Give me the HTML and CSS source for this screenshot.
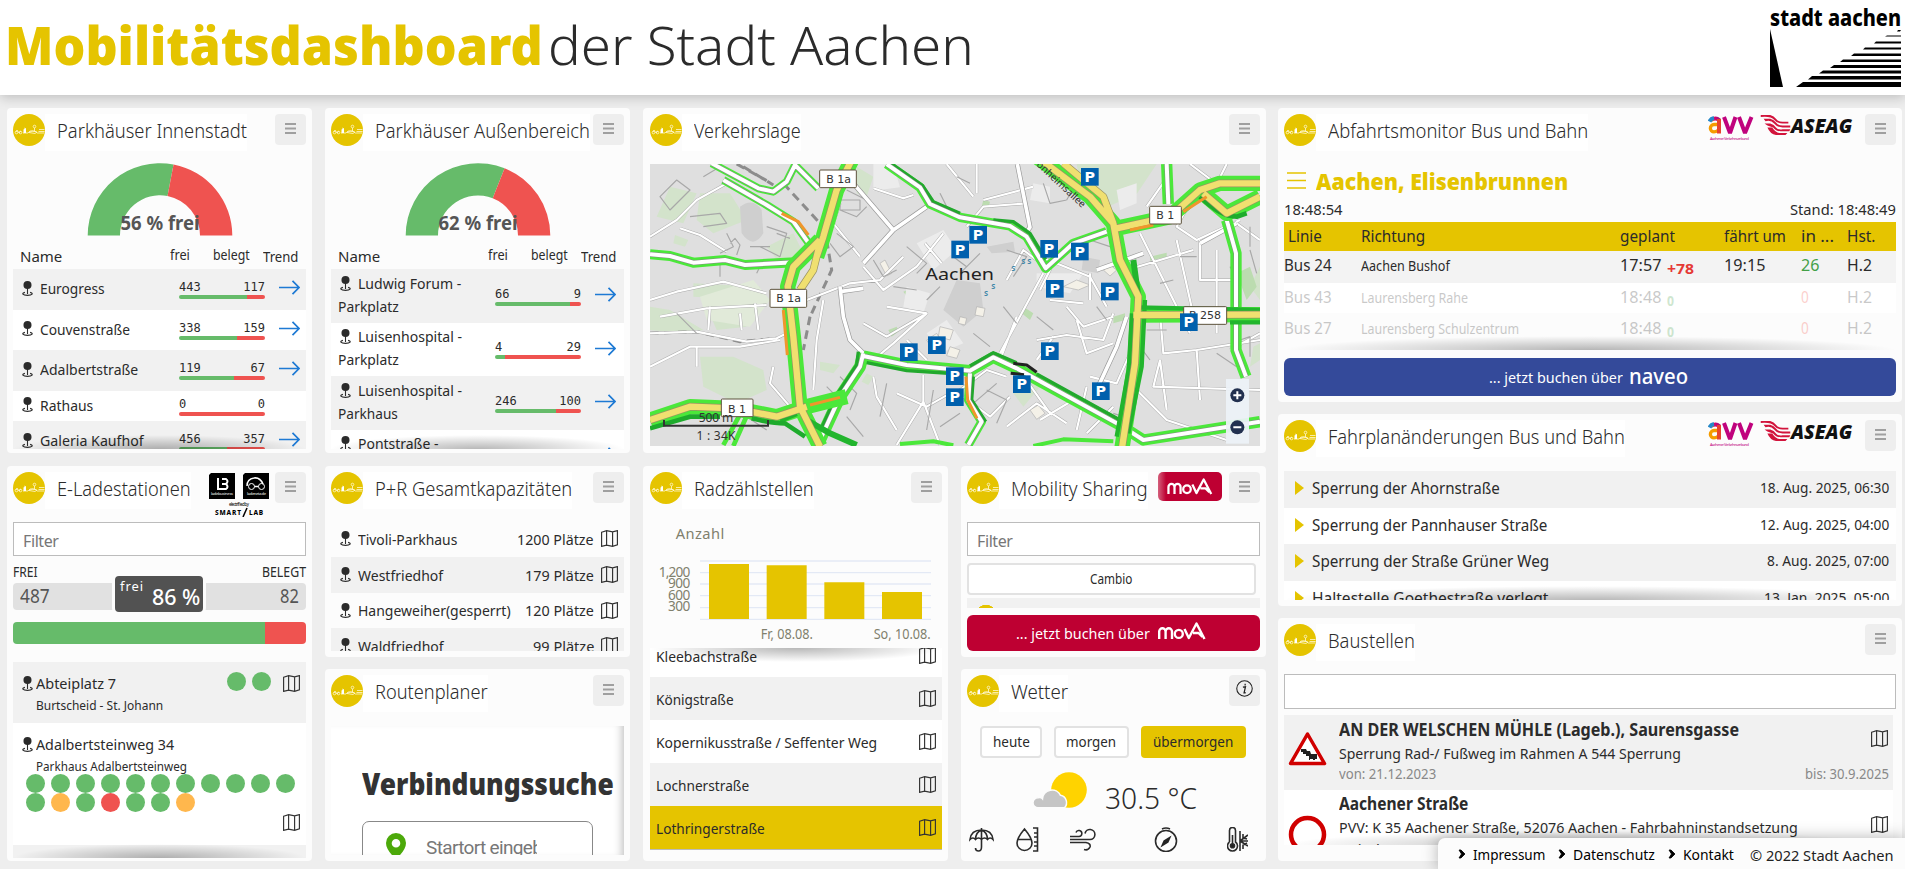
FILE: index.html
```html
<!DOCTYPE html>
<html lang="de">
<head>
<meta charset="utf-8">
<title>Mobilitätsdashboard der Stadt Aachen</title>
<link rel="stylesheet" href="styles.css">
</head>
<body>
<svg class="defs" width="0" height="0">
  <defs>
    <symbol id="pin" viewBox="0 0 12 17"><circle cx="6" cy="4.6" r="4.4" fill="#2b2b2b"/><path d="M6 8v6.5M3.2 12.7C-.8 13.6.6 16 6 16s6.800-2.400 2.800-3.300" fill="none" stroke="#2b2b2b" stroke-width="1.200"/></symbol>
    <symbol id="map" viewBox="0 0 17 17"><path d="M.6 2.200 5.600.7l6 1.200L16.400.6v14.200l-4.800 1.500-6-1.200-5 1.300zM5.600.7v14.400M11.600 1.900v14.400" fill="none" stroke="#333" stroke-width="1.150"/></symbol>
    <symbol id="arrow" viewBox="0 0 21 15"><path d="M0 7.500h20M13.500.8l6.500 6.700-6.500 6.700" fill="none" stroke="#1e7ad4" stroke-width="1.700"/></symbol>
    <symbol id="burger" viewBox="0 0 11 11"><path d="M0 1h11M0 5.500h11M0 10h11" stroke="#9f9f9f" stroke-width="1.800"/></symbol>
    <symbol id="logo" viewBox="0 0 32 32"><circle cx="16" cy="16" r="16" fill="#e5c400"/><g fill="none" stroke="#fff8d0" stroke-width=".8"><path d="M3 18l1-2 2 3 2-2M10 19h5l2-2h5l2 2h7"/><circle cx="3.500" cy="18.500" r="1.300"/><circle cx="7.500" cy="18.500" r="1.300"/><circle cx="21.500" cy="12.500" r="1.300"/><path d="M21.500 14v3M16 18.500l3-1.500 5 1-2 1.500zM26 15.500h5.500M25.500 17.500h6"/></g><path d="M10.500 19v-3.500l1-.5v-1.500l1.500 1V19z" fill="#fff"/></symbol>
    <symbol id="mova" viewBox="0 0 48 18"><g fill="none" stroke="#fff" stroke-width="2.400" stroke-linejoin="round"><path d="M1.200 17V9.500a3.200 3.200 0 0 1 6.400 0V17M7.600 17V9.500a3.200 3.200 0 0 1 6.400 0V17"/><circle cx="20.800" cy="11.900" r="4"/><path d="M26.500 7l4.300 9L38.500 1.500 46.500 17M35 11h5.500l4 4"/></g></symbol>
    <symbol id="aseag" viewBox="0 0 31 21"><path d="M0 0h10q4 1 6 4t7 3h6v2h-6q-6 0-9-4T0 2zM3 4h7q4 1 6 4t7 3h8v2h-8q-6 0-9-4T5 6.500zM4 9h6q4 1 6 4t7 2h8l-1 2H21q-5 0-8-4l-6-2zM7 13h5q4 6 9 6h7l-2 2H16q-6-1-9-8z" fill="#d2143c"/></symbol>
    <linearGradient id="avvg"><stop offset="0" stop-color="#f9b000"/><stop offset=".28" stop-color="#ee5a24"/><stop offset=".45" stop-color="#d6006e"/><stop offset="1" stop-color="#a5127d"/></linearGradient>
    <symbol id="avv" viewBox="0 0 46 26"><g fill="none" stroke-width="4"><path d="M3 5q5-3 8 0v12" stroke="url(#avvg)"/><path d="M1.500 6.500q1.500-3 4.500-3.500" stroke="#2688c9"/><path d="M11 9.500H6a3.300 3.300 0 0 0 0 7.300q4 0 5-3" stroke="#f59c00" stroke-width="3.300"/><path d="M11 4v14.500" stroke="#e8432e"/><path d="M16 2l6 16 5.500-16M31 2l6 16 6.500-16" stroke="#c0027d" stroke-linejoin="bevel"/></g><text x="2" y="25" font-size="4" textLength="39" fill="#c0027d">Aachener Verkehrsverbund</text></symbol>
  </defs>
</svg>

<header class="top">
  <h1><b data-w="538">Mobilitätsdashboard</b><span data-w="426">der Stadt Aachen</span></h1>
  <svg class="city" width="132" height="80" viewBox="0 0 132 80">
    <text x="0" y="18" font-size="23" font-weight="800" textLength="131" lengthAdjust="spacingAndGlyphs">stadt aachen</text>
    <path d="M0 21v58h13z"/>
    <path d="M128 22h3l-1 1.500h-3zM117 27.500h14v1H115zM106 33.500h25v2h-27zM95 39.500h36v2H93zM84 45.500h47v2.500H81zM73 51.500h58V54H70zM64 57h67v3H60zM53 62.500h78v3H49zM42 68h89v3.500H38zM33 74h98v5H26z"/>
  </svg>
</header>

<main class="board">
  <div class="left">
    <section class="card">
      <div class="head"><svg class="ico"><use href="#logo"/></svg><h2><span data-w="190">Parkhäuser Innenstadt</span></h2><button class="menu"><svg><use href="#burger"/></svg></button></div>
      <div class="gauge"><svg width="146" height="74" viewBox="0 0 146 74"><path d="M.7 72.500a72.300 72.300 0 0 1 85.850-71l-6.050 31.500A40 40 0 0 0 33 72.500z" fill="#66bb6a"/><path d="M86.550 1.500A72.300 72.300 0 0 1 145.300 72.500H113a40 40 0 0 0-32.500-39.500z" fill="#ef5350"/><text x="73" y="66.500" text-anchor="middle" textLength="79" lengthAdjust="spacingAndGlyphs">56 % frei</text></svg></div>
      <div class="park p1">
        <div class="cols"><span class="cn">Name</span><span class="cf" data-w="20">frei</span><span class="cb" data-w="37">belegt</span><span class="ct" data-w="35">Trend</span></div>
        <div class="pr h41 odd"><div class="nm"><svg class="pin"><use href="#pin"/></svg><span data-w="65">Eurogress</span></div><div class="bar"><i>443</i><i>117</i><u style="--g:79%"></u></div><svg class="tr"><use href="#arrow"/></svg></div>
        <div class="pr h40"><div class="nm"><svg class="pin"><use href="#pin"/></svg><span data-w="90">Couvenstraße</span></div><div class="bar"><i>338</i><i>159</i><u style="--g:68%"></u></div><svg class="tr"><use href="#arrow"/></svg></div>
        <div class="pr h41 odd"><div class="nm"><svg class="pin"><use href="#pin"/></svg><span data-w="98">Adalbertstraße</span></div><div class="bar"><i>119</i><i>67</i><u style="--g:64%"></u></div><svg class="tr"><use href="#arrow"/></svg></div>
        <div class="pr h30"><div class="nm"><svg class="pin"><use href="#pin"/></svg><span data-w="53">Rathaus</span></div><div class="bar"><i>0</i><i>0</i><u style="--g:0%"></u></div></div>
        <div class="pr h41 odd"><div class="nm"><svg class="pin"><use href="#pin"/></svg><span data-w="104">Galeria Kaufhof</span></div><div class="bar"><i>456</i><i>357</i><u style="--g:56%"></u></div><svg class="tr"><use href="#arrow"/></svg></div>
        <div class="fade"></div>
      </div>
    </section>

    <section class="card">
      <div class="head"><svg class="ico"><use href="#logo"/></svg><h2><span data-w="215">Parkhäuser Außenbereich</span></h2><button class="menu"><svg><use href="#burger"/></svg></button></div>
      <div class="gauge"><svg width="146" height="74" viewBox="0 0 146 74"><path d="M.7 72.500a72.300 72.300 0 0 1 98.900-67.200L87.700 35.300A40 40 0 0 0 33 72.500z" fill="#66bb6a"/><path d="M99.600 5.300A72.300 72.300 0 0 1 145.300 72.500H113a40 40 0 0 0-25.300-37.200z" fill="#ef5350"/><text x="73" y="66.500" text-anchor="middle" textLength="79" lengthAdjust="spacingAndGlyphs">62 % frei</text></svg></div>
      <div class="park p2">
        <div class="cols"><span class="cn">Name</span><span class="cf" data-w="20">frei</span><span class="cb" data-w="37">belegt</span><span class="ct" data-w="35">Trend</span></div>
        <div class="pr h54 odd"><div class="nm two"><svg class="pin"><use href="#pin"/></svg><span data-w="103">Ludwig Forum -</span><br><span data-w="61">Parkplatz</span></div><div class="bar"><i>66</i><i>9</i><u style="--g:87%"></u></div><svg class="tr"><use href="#arrow"/></svg></div>
        <div class="pr h53"><div class="nm two"><svg class="pin"><use href="#pin"/></svg><span data-w="104">Luisenhospital -</span><br><span data-w="61">Parkplatz</span></div><div class="bar"><i>4</i><i>29</i><u style="--g:12%"></u></div><svg class="tr"><use href="#arrow"/></svg></div>
        <div class="pr h54 odd"><div class="nm two"><svg class="pin"><use href="#pin"/></svg><span data-w="104">Luisenhospital -</span><br><span data-w="60">Parkhaus</span></div><div class="bar"><i>246</i><i>100</i><u style="--g:71%"></u></div><svg class="tr"><use href="#arrow"/></svg></div>
        <div class="pr h54 cut"><div class="nm two"><svg class="pin"><use href="#pin"/></svg><span data-w="80">Pontstraße -</span></div><svg class="tr"><use href="#arrow"/></svg></div>
        <div class="fade"></div>
      </div>
    </section>

    <section class="card wide">
      <div class="head"><svg class="ico"><use href="#logo"/></svg><h2><span data-w="107">Verkehrslage</span></h2><button class="menu"><svg><use href="#burger"/></svg></button></div>
      <svg class="citymap" width="610" height="282" viewBox="30 192 1830 846">
        <rect x="30" y="192" width="1830" height="846" fill="#dfdfdf"/>
        <g fill="#d3e3cb">
          <path d="M90 260l80 20-40 90-80-20zM180 280h90l50 80-100 40-50-40zM1310 192h240l-60 90-90 40-80-70zM180 770l100 0 90 40 10 60-90 40-100-50zM30 620l60 10 100 60-60 10-100-10zM200 620l60-10 60 70-90 10zM380 440l80-40 30 60-70 30zM650 200l50 30-20 60-30-10zM1830 560l30-60v100zM1140 820l60 40-50 60-30-40zM1840 740l20-10v50l-30 20zM540 785l60 10-20 25-40-10zM680 820l20 10-15 25-20-10zM105 405l40 15-10 20-35-10zM160 550l200 10v40l-200-10z"/>
          <path d="M180 590l160-50 50 60-60 80-130-20z" fill="#e1ead9"/>
          <path d="M790 575l25-10 15 15-25 15zM745 690l25-10 5 15-20 15zM1530 470l50-12v12l-50 12zM1150 620l30 20-10 20-25-20zM1030 300l20 5-5 20-20-5zM1420 650l35-10v20l-35 10zM1790 520l40-20 20 60-30 40z" fill="#bcdcb0"/>
        </g>
        <g fill="#ececec"><path d="M700 192h60l20 70-80 10zM1430 270l60-20v60l-50 20zM1180 250l50 10v50l-60-10zM830 430l80-40 40 60-70 60zM800 560l70 20-20 60-60-20zM860 700l60-40 50 70-70 30zM1190 520h140l-40 60-100-20z"/></g>
        <g fill="#cfcfcf"><path d="M950 540l70 10 10 80-60 50-60-50zM300 320q40-30 65 10l5 70q-30 50-65 0zM1040 440l80-15 5 30-70 5zM1330 470l50 10-5 40-50-10z"/></g>
        <g fill="#f4f1e8" stroke="#b0b0b0" stroke-width="2"><path d="M860 720l30-20 15 25-30 20zM900 680l40 10-10 30-35-10zM930 740l30 10-10 25-30-8zM1390 510l20-15 20 15-20 18zM1170 930l25-15 20 25-25 18zM720 490l15-10 20 40-15 8zM1010 620l25 5-5 25-25-5zM960 650l20 5-5 20-20-5zM1270 560l40-20 40 15-35 15z"/></g>
        <g fill="none" stroke="#8c8c8c" stroke-width="9" stroke-dasharray="26 16">
          <path d="M290 192l90 50M310 200l90 55M430 250l110 120M560 420l15 90-60 130M510 650l-20 100M30 700l140-5 130 30 110-10"/>
        </g>
        <g id="streets" fill="none" stroke-linejoin="round">
          <g stroke="#a8a8a8" stroke-width="9">
            <path d="M30 410l80-50 60-60 90-50M120 385l60 20 80 50M30 600l80-25 140-30 130 35M60 650l140-25 180-10M30 700l140-5 150 30 90-10 60-30M30 800l120-60h150l120-20M210 620l-5 70M300 640l5 50M345 610l10 80M170 740v60M400 800l-10 50 60 70M550 600l-20 120-10 150M500 600l130-50 90-10 70-70M720 540l60-60M670 500l60 70 100-70 80-100M740 620l120 20-120 70-70-40M700 780l60-50 100-90M700 830l10 60 60 100M770 880l90 40 70-40M850 905l50 130M850 905l-80 130M850 905v-80M800 720l60 60M660 470l-80-100 20-60M700 265l90 30 30-10M855 430l50 60M980 380l50-60 130-10M1000 290l-80-98M1010 280v-88M1030 300l150-40M1100 540l50-90 80 60-30 60M1200 470l150 60 50 90M1350 520v80M1280 620l50 60 90-30M1310 660l30 100 80-30M1230 600l100 10M1080 760l130-240M1130 650l-50 130M1190 720l90-15 110 15 30-80M1190 780l50-70M1350 830l80 20 40-90M1340 860l-30 130M1500 400l60 120 90 180M1460 510l200-60M1610 420l60 270M1660 290l-50 90 60 40 130-60M1680 420v120h110M1730 450v250M1560 640l10 120 100-10 190-30M1560 780l-20 80 320 10M1560 780l20 150M1670 750l10 150M1590 220l-70 100M1790 370l70 50M1650 192l80 60 30-60M1480 860l100 100 180 60M960 870l80-60 60 20M970 890l80 60 60-60M1100 980l90-70 90 60M1340 1000l80-80M1130 800l100 140M1200 960l100-60M1860 700l-90 50"/>
          </g>
          <g stroke="#fff" stroke-width="6.500">
            <path d="M30 410l80-50 60-60 90-50M120 385l60 20 80 50M30 600l80-25 140-30 130 35M60 650l140-25 180-10M30 700l140-5 150 30 90-10 60-30M30 800l120-60h150l120-20M210 620l-5 70M300 640l5 50M345 610l10 80M170 740v60M400 800l-10 50 60 70M550 600l-20 120-10 150M500 600l130-50 90-10 70-70M720 540l60-60M670 500l60 70 100-70 80-100M740 620l120 20-120 70-70-40M700 780l60-50 100-90M700 830l10 60 60 100M770 880l90 40 70-40M850 905l50 130M850 905l-80 130M850 905v-80M800 720l60 60M660 470l-80-100 20-60M700 265l90 30 30-10M855 430l50 60M980 380l50-60 130-10M1000 290l-80-98M1010 280v-88M1030 300l150-40M1100 540l50-90 80 60-30 60M1200 470l150 60 50 90M1350 520v80M1280 620l50 60 90-30M1310 660l30 100 80-30M1230 600l100 10M1080 760l130-240M1130 650l-50 130M1190 720l90-15 110 15 30-80M1190 780l50-70M1350 830l80 20 40-90M1340 860l-30 130M1500 400l60 120 90 180M1460 510l200-60M1610 420l60 270M1660 290l-50 90 60 40 130-60M1680 420v120h110M1730 450v250M1560 640l10 120 100-10 190-30M1560 780l-20 80 320 10M1560 780l20 150M1670 750l10 150M1590 220l-70 100M1790 370l70 50M1650 192l80 60 30-60M1480 860l100 100 180 60M960 870l80-60 60 20M970 890l80 60 60-60M1100 980l90-70 90 60M1340 1000l80-80M1130 800l100 140M1200 960l100-60M1860 700l-90 50"/>
          </g>
          <g stroke="#a8a8a8" stroke-width="3.500">
            <path d="M60 290l50-50 40 30-60 60zM150 350l90-10 20 30-70 10M190 230l50-30M260 400l20 40-40 20M380 380l60 20-20 70-60-30M410 400l40 15M600 330l50 20 30-30M590 400l50 40-40 30-30-40M620 270l60 30M700 480l30 50 40-20M800 440l60 50-30 30M760 560l70 10M110 640l60 60M600 830l50 50-20 50M880 870l-20 120M900 980l60-40M1000 910l70-60M1040 870l60 30-30 70M1420 940l60 20M1190 650l50 40M1280 300l50-90M1350 420l60 20M1100 450l60 20-40 60M1520 690h60M1760 330l60-40M1730 760l60 40M1800 720l30-10v60M1830 450l20 70M1210 250l20 60 50-10M600 300h60v30h-60zM270 430l15-15 15 20-10 30M240 480v50M330 440h60M370 480l-20 40M320 950l60 40M560 860l30 30M620 950l50 60M740 850l-20 100M900 280l30 60M950 230l40 20M1370 620l30 40M1500 740l30 40M1560 550l40-10M1620 470h50M1830 380v60M1770 500l30 50M1090 620l40 50M1000 700l50 40M960 520l60-60M900 560l-40 40M940 470l40 30"/>
          </g>
          <path d="M640 250l120 140-90 100M760 390l100-70M600 575l70-10M600 560l10 90 20 70 40 40M1132 192l38 190-15 20M1370 510l140-50M1460 650l-30 90-60 130M1790 370l-110 60" stroke="#999" stroke-width="15"/>
          <path d="M640 250l120 140-90 100M760 390l100-70M600 575l70-10M600 560l10 90 20 70 40 40M1132 192l38 190-15 20M1370 510l140-50M1460 650l-30 90-60 130M1790 370l-110 60" stroke="#fff" stroke-width="11"/>
          <g stroke="#4be83a">
            <path d="M215 190l140 75 45 10 40-30 25-50 70 70M250 240l130 75 80 50 50 70" stroke-width="24"/>
            <path d="M30 463l60 5 70 20 95-8 60 15 150-8" stroke-width="30"/>
            <path d="M740 192L840 262L870 312L960 352L1110 378L1160 410L1217 505L1300 430L1400 395" stroke-width="28"/>
            <path d="M670 768L800 795L990 812L1060 772L1130 805L1230 860L1440 975L1510 1020L1860 965M1580 192l5 120M1760 360l28 100v290l30 80" stroke-width="34"/>
            <path d="M540 1020l60-130 60-90 10-40" stroke-width="36"/>
            <path d="M250 1035l60-110M280 1038l40-90" stroke-width="14"/>
            <path d="M990 820l-5 80 40 65-40 70" stroke-width="26"/>
            <path d="M780 1032l100-8 60 12M1180 1038l90-20 150 6" stroke-width="12"/>
          </g>
          <g stroke="#22a82d" stroke-width="10">
            <path d="M530 1015l60-130 60-90 5-40M680 788L800 812L960 822M990 798L1060 758L1130 788M1190 822L1440 960M748 187L848 257L880 305L960 340M1060 360L1120 365L1170 400L1217 478M1000 830l-5 70 42 65"/>
          </g>
          <path id="main-grey" d="M215 190l140 75 45 10 40-30 25-50 70 70M250 240l130 75 80 50 50 70M670 768L800 795L990 812L1060 772L1130 805L1230 860L1440 975L1510 1020L1860 965M740 192L840 262L870 312L960 352L1110 378L1160 410L1217 505L1300 430L1400 395M30 463l60 5 70 20 95-8 60 15 150-8M540 1020l60-130 60-90 10-40M1580 192l5 120M1760 360l28 100v290l30 80M990 820l-5 80 40 65-40 70" stroke="#888" stroke-width="15"/>
          <path d="M215 190l140 75 45 10 40-30 25-50 70 70M250 240l130 75 80 50 50 70M670 768L800 795L990 812L1060 772L1130 805L1230 860L1440 975L1510 1020L1860 965M740 192L840 262L870 312L960 352L1110 378L1160 410L1217 505L1300 430L1400 395M30 463l60 5 70 20 95-8 60 15 150-8M540 1020l60-130 60-90 10-40M1580 192l5 120M1760 360l28 100v290l30 80M990 820l-5 80 40 65-40 70" stroke="#fff" stroke-width="12"/>
          <path d="M640 170l-50 100-40 140-20 60M540 420l-80 80-17 60 17 150 20 210 60 120M30 960l120-40 130 5 130 25 90-30 120-30M1190 170l160 120 70 80 20 110 55 110-10 200-40 260M1430 385l160-35 90-80 60-20 120 0M1690 280l70 60 100-50M1480 645l380-1" stroke="#4be83a" stroke-width="46"/>
          <path d="M420 960l50-20M500 960l70 40 80 35M1480 480l15 110" stroke="#22b52d" stroke-width="18"/>
          <path d="M1490 622l370 8M1770 667h90M1515 600l-10 200-40 200M1476 640l-10 170-36 200" stroke="#22b52d" stroke-width="13"/>
          <path d="M335 955q60 15 100 15l60 40M30 985l120-35h90M1680 290q60 60 110 60l30-10" stroke="#1eab2c" stroke-width="14"/>
          <path d="M640 170l-50 100-40 140-20 60M540 420l-80 80-17 60 17 150 20 210 60 120M540 430l-20 80-40 60M30 960l120-40 130 5 130 25 90-30M1190 170l160 120 70 80 20 110 55 110-10 200-40 260M1270 190l120 100 30 80M1430 385l160-35 90-80 60-20 120 0M1690 280l70 60 100-50M1480 645l380-1" stroke="#9a9363" stroke-width="23"/>
          <path d="M640 170l-50 100-40 140-20 60M540 420l-80 80-17 60 17 150 20 210 60 120M540 430l-20 80-40 60M30 960l120-40 130 5 130 25 90-30M1190 170l160 120 70 80 20 110 55 110-10 200-40 260M1270 190l120 100 30 80M1430 385l160-35 90-80 60-20 120 0M1690 280l70 60 100-50M1480 645l380-1" stroke="#f0e070" stroke-width="19"/>
          <path d="M430 630l12 135M510 915l90-23M425 340l50 25 30 40M1470 390l70-15M1630 335l70-45M978 830l5 70 28 55" stroke="#f0962c" stroke-width="9"/>
          <path d="M1120 790l40 5 30 22M1112 820l40 4" stroke="#222" stroke-width="9"/>
        </g>
        <text class="street" transform="translate(1188 196) rotate(43)" font-size="30">onheimsallee</text>
        <g class="shield"><rect x="539" y="210" width="110" height="53"/><text x="596" y="249">B 1a</text><rect x="390" y="568" width="110" height="54"/><text x="446" y="607">B 1a</text><rect x="244" y="897" width="95" height="53"/><text x="291" y="938">B 1</text><rect x="1529" y="319" width="95" height="53"/><text x="1576" y="358">B 1</text><rect x="1631" y="620" width="129" height="53"/><text x="1695" y="658">B 258</text></g>
        <g font-size="22" fill="#3f87a8" font-weight="700"><text x="1144" y="491">S</text><text x="1162" y="491">S</text><text x="1114" y="514">S</text><text x="1054" y="566">S</text><text x="1032" y="588">S</text></g>
        <text class="town" x="856" y="539" textLength="206" lengthAdjust="spacingAndGlyphs">Aachen</text>
        <g class="p">
          <rect x="934" y="422"/><text x="960" y="464">P</text><rect x="988" y="378"/><text x="1014" y="420">P</text><rect x="1323" y="204"/><text x="1349" y="246">P</text><rect x="1201" y="420"/><text x="1227" y="462">P</text><rect x="1293" y="428"/><text x="1319" y="470">P</text><rect x="1218" y="540"/><text x="1244" y="582">P</text><rect x="1383" y="548"/><text x="1409" y="590">P</text><rect x="1620" y="640"/><text x="1646" y="682">P</text><rect x="1203" y="727"/><text x="1229" y="769">P</text><rect x="1119" y="826"/><text x="1145" y="868">P</text><rect x="1356" y="847"/><text x="1382" y="889">P</text><rect x="780" y="730"/><text x="806" y="772">P</text><rect x="864" y="709"/><text x="890" y="751">P</text><rect x="918" y="802"/><text x="944" y="844">P</text><rect x="918" y="865"/><text x="944" y="907">P</text>
        </g>
        <path d="M72 960v17h312v-17" fill="none" stroke="#333" stroke-width="6"/>
        <g fill="#333" text-anchor="middle" font-size="36"><text x="228" y="965" textLength="103">500 m</text><text x="228" y="1019" textLength="117">1 : 34K</text></g>
        <rect x="1758" y="837" width="69" height="194" fill="#edf2f8" opacity=".93"/>
        <g fill="#22304f"><circle cx="1792" cy="886" r="21"/><circle cx="1792" cy="982" r="21"/></g>
        <path d="M1780 886h24M1792 874v24M1780 982h24" stroke="#fff" stroke-width="6"/>
      </svg>
    </section>

    <section class="card">
      <div class="head"><svg class="ico"><use href="#logo"/></svg><h2><span data-w="134">E-Ladestationen</span></h2>
        <svg class="lab" width="60" height="44" viewBox="0 0 60 44"><path d="M2 0h24v26H0V2zM36 0h24v26H34V2z"/><g fill="none" stroke="#fff"><path d="M9 5v11h8q3-2 0-5 3-3 0-5h-4M13 11h4" stroke-width="2"/><circle cx="42.500" cy="13.500" r="3"/><circle cx="52.500" cy="13.500" r="3"/><path d="M38 13q0-7 7-8 6-1 9 6M45.500 13.500h4" stroke-width="1.500"/></g><g fill="#fff" font-size="4"><text x="2" y="22" textLength="22">ladebusiness</text><text x="38" y="22" textLength="19">ladenetz.de</text></g><text x="20" y="33" font-size="4.500" textLength="20">electrified by</text><g font-size="6.500" font-weight="800"><text x="6" y="42" textLength="26">SMART</text><text x="40" y="42" textLength="14">LAB</text></g><path d="M34 44l4-9" stroke="#000" stroke-width="1.500"/></svg>
        <button class="menu"><svg><use href="#burger"/></svg></button></div>
      <input class="flt" placeholder="Filter">
      <div class="fb"><span data-w="25">FREI</span><span data-w="44">BELEGT</span></div>
      <div class="tot"><span data-w="30">487</span><div class="badge"><small>frei</small><span data-w="48">86 %</span></div><span data-w="19">82</span></div>
      <div class="prog"></div>
      <div class="stations">
        <div class="st s1"><svg class="pin"><use href="#pin"/></svg><p><span data-w="80">Abteiplatz 7</span><br><small data-w="127">Burtscheid - St. Johann</small></p><div class="dots"><i></i><i></i></div><svg class="map"><use href="#map"/></svg></div>
        <div class="st s2"><svg class="pin"><use href="#pin"/></svg><p><span data-w="138">Adalbertsteinweg 34</span><br><small data-w="151">Parkhaus Adalbertsteinweg</small></p><div class="dots"><i></i><i></i><i></i><i></i><i></i><i></i><i></i><i></i><i></i><i></i><i></i><i></i><i class="o"></i><i></i><i class="r"></i><i></i><i></i><i class="o"></i></div><svg class="map"><use href="#map"/></svg></div>
        <div class="st s3"><svg class="pin"><use href="#pin"/></svg></div>
        <div class="fade"></div>
      </div>
    </section>

    <div class="stack">
      <section class="card">
        <div class="head"><svg class="ico"><use href="#logo"/></svg><h2><span data-w="197">P+R Gesamtkapazitäten</span></h2><button class="menu"><svg><use href="#burger"/></svg></button></div>
        <div class="pnr">
          <div><svg class="pin"><use href="#pin"/></svg><span data-w="99">Tivoli-Parkhaus</span><b><span data-w="77">1200 Plätze</span></b><svg class="map"><use href="#map"/></svg></div>
          <div><svg class="pin"><use href="#pin"/></svg><span data-w="85">Westfriedhof</span><b><span data-w="69">179 Plätze</span></b><svg class="map"><use href="#map"/></svg></div>
          <div><svg class="pin"><use href="#pin"/></svg><span data-w="153">Hangeweiher(gesperrt)</span><b><span data-w="69">120 Plätze</span></b><svg class="map"><use href="#map"/></svg></div>
          <div><svg class="pin"><use href="#pin"/></svg><span data-w="86">Waldfriedhof</span><b><span data-w="61">99 Plätze</span></b><svg class="map"><use href="#map"/></svg></div>
        </div>
      </section>
      <section class="card">
        <div class="head"><svg class="ico"><use href="#logo"/></svg><h2><span data-w="113">Routenplaner</span></h2><button class="menu"><svg><use href="#burger"/></svg></button></div>
        <div class="route"><h3><span data-w="252">Verbindungssuche</span></h3><div class="rbox"><svg width="20" height="26" viewBox="0 0 20 26"><path d="M10 0A10 10 0 0 0 0 10q0 7 10 16 10-9 10-16A10 10 0 0 0 10 0zm0 6a4.300 4.300 0 1 1 0 8.600A4.300 4.300 0 0 1 10 6z" fill="#4ca90a" fill-rule="evenodd"/></svg><span class="clip">Startort eingeben</span></div></div>
      </section>
    </div>

    <section class="card c3">
      <div class="head"><svg class="ico"><use href="#logo"/></svg><h2><span data-w="120">Radzählstellen</span></h2><button class="menu"><svg><use href="#burger"/></svg></button></div>
      <svg class="chart" width="292" height="137" viewBox="30 150 876 411">
        <path d="M180 303h693M180 338h693M180 372h693M180 407h693M180 443h693M180 478h693" stroke="#e3e9f5" stroke-width="4"/>
        <path d="M207 312h120v165H207zM380 316h120v161H380zM553 367h120v110H553zM726 396h120v81H726z" fill="#e5c400"/>
        <g fill="#80806d"><text x="107" y="237" font-size="44" textLength="146">Anzahl</text><g font-size="41" text-anchor="end"><text x="151" y="350" textLength="95">1,200</text><text x="151" y="384" textLength="67">900</text><text x="151" y="419" textLength="67">600</text><text x="151" y="453" textLength="67">300</text></g><g font-size="42"><text x="362" y="537" textLength="157" lengthAdjust="spacingAndGlyphs">Fr, 08.08.</text><text x="701" y="537" textLength="171" lengthAdjust="spacingAndGlyphs">So, 10.08.</text></g></g>
      </svg>
      <div class="rad">
        <div><span data-w="101">Kleebachstraße</span><svg class="map"><use href="#map"/></svg></div>
        <div><span data-w="78">Königstraße</span><svg class="map"><use href="#map"/></svg></div>
        <div><span data-w="221">Kopernikusstraße / Seffenter Weg</span><svg class="map"><use href="#map"/></svg></div>
        <div><span data-w="93">Lochnerstraße</span><svg class="map"><use href="#map"/></svg></div>
        <div class="sel"><span data-w="109">Lothringerstraße</span><svg class="map"><use href="#map"/></svg></div>
      </div>
    </section>

    <div class="stack">
      <section class="card">
        <div class="head"><svg class="ico"><use href="#logo"/></svg><h2><span data-w="137">Mobility Sharing</span></h2><span class="movab"><svg width="46" height="17"><use href="#mova"/></svg></span><button class="menu"><svg><use href="#burger"/></svg></button></div>
        <input class="flt" placeholder="Filter">
        <button class="cambio"><span data-w="42">Cambio</span></button>
        <div class="strip"></div>
        <button class="book red"><span data-w="134">... jetzt buchen über</span><svg width="48" height="18"><use href="#mova"/></svg></button>
      </section>
      <section class="card">
        <div class="head"><svg class="ico"><use href="#logo"/></svg><h2><span data-w="57">Wetter</span></h2><button class="menu info"><svg viewBox="0 0 16 16"><circle cx="8" cy="8" r="7.300" fill="none" stroke="#222" stroke-width="1"/><path d="M6.500 6.800 8.900 6.400 7.600 12h1.500M8.600 3.600v1.500" fill="none" stroke="#222" stroke-width="1.200"/></svg></button></div>
        <div class="days"><button><span data-w="37">heute</span></button><button><span data-w="50">morgen</span></button><button class="on"><span data-w="80">übermorgen</span></button></div>
        <div class="temp"><svg width="56" height="40" viewBox="0 0 56 40"><circle cx="37" cy="19" r="17.800" fill="#ffd300"/><path d="M6 36.800a5 5 0 0 1 0-10q3-1 4.500 1a9.500 9.500 0 0 1 18-3.500 7.500 7.500 0 0 1 4 12.500z" fill="#c5c5c5" stroke="#fcfcfc" stroke-width="1.500"/></svg><span data-w="92">30.5 °C</span></div>
        <div class="wx">
          <svg width="25" height="25" viewBox="0 0 25 25"><path d="M1 12.500Q2 3 12.500 3T24 12.500q-3-3-5.500 0-3-3-6 0-3-3-6 0-2.500-3-5.500 0zM6.500 12Q7 5 12.500 3q5.500 2 6 9M12.500 1v19q0 4-3 4t-3-3"/></svg>
          <svg width="23" height="25" viewBox="0 0 23 25"><path d="M8.500 2Q1 11 1 16a7.500 7.500 0 0 0 15 0Q16 11 8.500 2zM2 12.500h13M17 1h4.500v23H17M18 6h3M18 10h3M18 15h3M18 19h3"/></svg>
          <svg width="26" height="25" viewBox="0 0 26 25"><path d="M0 9.500h9a3 3 0 1 0-3-4M0 12.500h20a5 5 0 1 0-5-6M0 15.500h16q5 1 4 4.500-2 4-6 2.500"/></svg>
          <svg width="24" height="25" viewBox="0 0 24 25"><circle cx="12" cy="14" r="10.500"/><path d="M8 2q4-2 8 0"/><path d="M17.500 8.500l-3 7-8 5 3-7z" fill="#222" stroke="none"/></svg>
          <svg width="21" height="25" viewBox="0 0 21 25"><path d="M2.500 15V3.500a3 3 0 0 1 6 0V15a5 5 0 1 1-6 0M5.500 8v11M13 4v20M13 14l8-6M13 14l8 5M13 14h8M16 7v4l4 1M16 22v-4l4-2"/><circle cx="5.500" cy="18.800" r="2" fill="#222"/></svg>
        </div>
      </section>
    </div>
  </div>

  <div class="right">
    <section class="card">
      <div class="head"><svg class="ico"><use href="#logo"/></svg><h2><span data-w="260">Abfahrtsmonitor Bus und Bahn</span></h2><span class="ops"><svg width="46" height="26"><use href="#avv"/></svg><svg width="31" height="20"><use href="#aseag"/></svg><b data-w="61">ASEAG</b></span><button class="menu"><svg><use href="#burger"/></svg></button></div>
      <div class="stop"><svg width="19" height="17" viewBox="0 0 19 17"><path d="M0 1h19M0 8.500h19M0 16h19" stroke="#e5c400" stroke-width="1.600"/></svg><h3 data-w="252">Aachen, Elisenbrunnen</h3></div>
      <div class="clock"><span data-w="59">18:48:54</span><span data-w="106">Stand: 18:48:49</span></div>
      <div class="dep">
        <div class="dr dh"><span><b data-w="34">Linie</b></span><span><b data-w="64">Richtung</b></span><span><b data-w="55">geplant</b></span><span><b data-w="62">fährt um</b></span><span><b data-w="33">in ...</b></span><span><b data-w="28">Hst.</b></span></div>
        <div class="dr d1"><span><b data-w="48">Bus 24</b></span><span class="dir"><b data-w="89">Aachen Bushof</b></span><span><b data-w="41">17:57</b><em data-w="27">+78</em></span><span><b data-w="41">19:15</b></span><span class="ok"><b data-w="18">26</b></span><span><b data-w="25">H.2</b></span></div>
        <div class="dr d2 old"><span><b data-w="48">Bus 43</b></span><span class="dir"><b data-w="107">Laurensberg Rahe</b></span><span><b data-w="41">18:48</b><em data-w="7">0</em></span><span></span><span class="no"><b data-w="8">0</b></span><span><b data-w="25">H.2</b></span></div>
        <div class="dr d3 old"><span><b data-w="48">Bus 27</b></span><span class="dir"><b data-w="158">Laurensberg Schulzentrum</b></span><span><b data-w="41">18:48</b><em data-w="7">0</em></span><span></span><span class="no"><b data-w="8">0</b></span><span><b data-w="25">H.2</b></span></div>
        <div class="fade"></div>
      </div>
      <button class="book blue"><span data-w="134">... jetzt buchen über</span><b data-w="59">naveo</b></button>
    </section>

    <section class="card">
      <div class="head"><svg class="ico"><use href="#logo"/></svg><h2><span data-w="297">Fahrplanänderungen Bus und Bahn</span></h2><span class="ops"><svg width="46" height="26"><use href="#avv"/></svg><svg width="31" height="20"><use href="#aseag"/></svg><b data-w="61">ASEAG</b></span><button class="menu"><svg><use href="#burger"/></svg></button></div>
      <div class="news">
        <div><i></i><span data-w="188">Sperrung der Ahornstraße</span><time><span data-w="129">18. Aug. 2025, 06:30</span></time></div>
        <div><i></i><span data-w="235">Sperrung der Pannhauser Straße</span><time><span data-w="129">12. Aug. 2025, 04:00</span></time></div>
        <div><i></i><span data-w="237">Sperrung der Straße Grüner Weg</span><time><span data-w="122">8. Aug. 2025, 07:00</span></time></div>
        <div><i></i><span data-w="236">Haltestelle Goethestraße verlegt</span><time><span data-w="125">13. Jan. 2025, 05:00</span></time></div>
        <p class="fade"></p>
      </div>
    </section>

    <section class="card">
      <div class="head"><svg class="ico"><use href="#logo"/></svg><h2><span data-w="87">Baustellen</span></h2><button class="menu"><svg><use href="#burger"/></svg></button></div>
      <input class="flt">
      <div class="works">
        <article class="w1"><svg class="sign" width="39" height="35" viewBox="0 0 39 35"><path d="M19.500 3 36.500 32.500h-34z" fill="#fff" stroke="#d00000" stroke-width="3.500" stroke-linejoin="round"/><path d="M13 18h5l1 2h3l1 3h6v5h-2v1h-2v-1h-3v1h-1v-4h-3v-2h-3v-2h-2z" fill="#222"/></svg><div><h4 data-w="400">AN DER WELSCHEN MÜHLE (Lageb.), Saurensgasse</h4><p><span data-w="342">Sperrung Rad-/ Fußweg im Rahmen A 544 Sperrung</span></p><p class="when"><span data-w="97">von: 21.12.2023</span><span data-w="84">bis: 30.9.2025</span></p></div><svg class="map"><use href="#map"/></svg></article>
        <article class="w2"><svg class="sign" width="39" height="39" viewBox="0 0 39 39"><circle cx="19.500" cy="19.500" r="16.500" fill="#fff" stroke="#d00000" stroke-width="4.500"/></svg><div><h4 data-w="129">Aachener Straße</h4><p><span data-w="459">PVV: K 35 Aachener Straße, 52076 Aachen - Fahrbahninstandsetzung</span></p><p>zwischen Autobahn</p></div><svg class="map"><use href="#map"/></svg></article>
        <div class="fade"></div>
      </div>
    </section>
  </div>
</main>

<footer><a><svg><path d="M1 1h2l4 4-4 4H1l2.500-4z"/></svg><span data-w="72">Impressum</span></a><a><svg><path d="M1 1h2l4 4-4 4H1l2.500-4z"/></svg><span data-w="82">Datenschutz</span></a><a><svg><path d="M1 1h2l4 4-4 4H1l2.500-4z"/></svg><span data-w="51">Kontakt</span></a><span class="copy" data-w="143">© 2022 Stadt Aachen</span></footer>
<script src="fit.js"></script>
</body>
</html>
```
FILE: styles.css
```css
* { box-sizing: border-box; }
body { margin: 0; width: 1905px; height: 869px; overflow: hidden; background: #eee; font: 15px/20px "Noto Sans", "Open Sans", sans-serif; color: #2b2b2b; }
svg text { font-family: "Noto Sans", sans-serif; }
h1, h2, h3, h4, p { margin: 0; font-weight: 400; }
button { font: inherit; color: inherit; border: 0; padding: 0; }
[data-w] { display: inline-block; white-space: nowrap; transform-origin: 0 50%; flex: none; }
.defs { position: absolute; }
svg { flex: none; display: block; }

.top { height: 95px; background: #fff; box-shadow: 0 2px 12px rgba(0,0,0,.22); display: flex; justify-content: space-between; padding: 8px 3px 0 5px; }
.top h1 { font-size: 53px; line-height: 73px; font-weight: 300; display: flex; gap: 5px; }
.top h1 b { font-weight: 900; color: #e5c400; }

.board { display: flex; gap: 12px; padding: 13px 0 0 7px; }
.left { display: grid; grid-template-columns: repeat(4, 305px); grid-template-rows: 345px 395px; gap: 13px; }
.wide { grid-column: span 2; }
.stack { display: grid; grid-template-rows: 191px 192px; gap: 12px; }
.right { display: grid; grid-template-rows: 294px 192px 243px; gap: 12px; width: 624px; }
.card { background: #fcfcfc; border-radius: 4px; padding: 6px 6px 0; overflow: hidden; min-width: 0; }
.wide, .c3 { padding-left: 7px; }

.head { display: flex; height: 50px; align-items: flex-start; }
.ico { width: 32px; height: 32px; }
.head h2 { font-size: 20px; font-weight: 300; line-height: 33px; background: #fff; height: 37px; margin-right: auto; padding: 0 0 0 12px; white-space: nowrap; }
.menu { width: 31px; height: 31px; border-radius: 4px; background: #eee; display: flex; justify-content: center; padding-top: 9px; flex: none; margin-left: -10px; }
.menu svg { width: 11px; height: 11px; }
.info { padding-top: 5px; }
.info svg { width: 17px; height: 17px; }
.pin { width: 11px; height: 17px; }
.map { width: 17px; height: 17px; }
.fade { position: absolute; left: 0; right: 0; bottom: 0; height: 14px; background: radial-gradient(ellipse 50% 100% at 50% 100%, rgba(0,0,0,.28), rgba(0,0,0,0)); }

.gauge { display: flex; justify-content: center; height: 76px; margin-top: -1px; }
.gauge text { font-size: 19px; font-weight: 700; fill: #555; }
.park { position: relative; height: 210px; overflow: hidden; }
.cols { height: 30px; display: grid; grid-template-columns: 150px 43px 50px 1fr; padding-left: 7px; line-height: 34px; font-size: 15px; }
.cf, .cb { line-height: 31px; font-size: 14px; }
.pr { display: flex; align-items: center; background: #fff; position: relative; }
.odd { background: #f1f1f1; }
.h41 { height: 41px; } .h40 { height: 40px; } .h30 { height: 30px; } .h54 { height: 54px; } .h53 { height: 53px; }
.nm { width: 166px; padding: 0 0 3px 9px; display: flex; gap: 7px; align-items: center; }
.two { display: block; width: 164px; line-height: 23px; padding: 0 0 3px 7px; }
.two .pin { display: inline-block; margin: 0 7px -3px 2px; }
.bar { width: 86px; display: flex; flex-wrap: wrap; justify-content: space-between; font: 12px/14px "DejaVu Sans Mono", monospace; }
.bar i { font-style: normal; }
.bar u { width: 100%; height: 4px; margin-top: 1px; border-radius: 2px; background: linear-gradient(90deg, #66bb6a var(--g), #ef5350 var(--g)); }
.tr { width: 21px; height: 15px; margin: 0 0 4px 14px; }
.h54.h54 .tr, .h53 .tr { margin-bottom: 3px; }
.cut { align-items: flex-start; padding-top: 2px; }
.cut.cut .tr { margin: 15px 0 0 100px; }

.street { fill: #333; stroke: none; }
.shield rect { fill: #fff; stroke: #5d523c; stroke-width: 3; rx: 3px; }
.shield text { font-size: 33px; text-anchor: middle; fill: #333; font-family: "DejaVu Sans", sans-serif; }
.citymap .town { font-size: 50px; fill: #222; }
.p rect { width: 53px; height: 53px; fill: #0060ad; }
.p text { font-size: 43px; font-weight: 700; fill: #fff; text-anchor: middle; font-family: "DejaVu Sans", sans-serif; }

.flt { display: block; width: 100%; height: 34px; border: 1px solid #bcbcbc; background: #fff; padding: 4px 9px 0; font: 16px "Noto Sans", sans-serif; }
.flt::placeholder { color: #777; letter-spacing: -.4px; }
.lab { margin: 1px 6px 0 0; }
.lab + .menu, .movab + .menu, .ops + .menu { margin-left: 0; }
.fb { display: flex; justify-content: space-between; font-size: 14px; line-height: 31px; height: 27px; }
.tot { height: 27px; background: #e1e1e1; border-radius: 4px; display: flex; justify-content: space-between; align-items: center; padding: 0 7px; font-size: 19px; line-height: 24px; color: #555; }
.tot > span { position: relative; top: -1px; }
.badge { width: 94px; height: 42px; border: 3px solid #fcfcfc; border-radius: 7px; background: #525252; color: #fff; font-size: 21px; line-height: 43px; display: flex; padding-left: 5px; gap: 8px; font-weight: 500; margin-top: -5px; position: relative; left: -6px; }
.badge small { font-size: 13px; line-height: 21px; letter-spacing: 1px; font-weight: 400; }
.prog { height: 22px; border-radius: 4px; margin: 12px 0 18px; background: linear-gradient(90deg, #66bb6a 86%, #ef5350 86%); }
.stations { position: relative; height: 196px; overflow: hidden; }
.st { display: flex; padding: 10px 6px 0 9px; background: #fff; }
.st .pin { margin: 3px 3px 0 0; }
.st p { line-height: 21px; padding-top: 1px; }
.st small { font-size: 13px; line-height: 20px; }
.dots { display: flex; flex-wrap: wrap; gap: 0 6px; }
.dots i { width: 19px; height: 19px; border-radius: 50%; background: #66bb6a; }
.dots .o { background: #ffb74d; } .dots .r { background: #ef5350; }
.s1 { height: 61px; background: #f1f1f1; }
.s1 .dots { margin: 0 12px 0 auto; }
.s1 .map { margin-top: 3px; }
.s2 { height: 122px; flex-wrap: wrap; align-content: flex-start; }
.s2 p { width: 250px; height: 41px; }
.s2 .dots { margin-left: 4px; }
.s2 .map { margin: 2px 0 0 261px; }
.s3 { height: 60px; padding-top: 9px; background: #f1f1f1; }

.pnr { height: 130px; overflow: hidden; margin-top: -1px; }
.pnr div { height: 36px; display: flex; align-items: center; padding: 0 6px 1px 9px; gap: 7px; background: #fcfcfc; }
.pnr div:nth-child(even) { background: #f1f1f1; }
.pnr div:nth-child(3) { height: 35px; }
.pnr b { font-weight: 400; margin-left: auto; }
.route { background: #fff; height: 129px; margin-top: 1px; overflow: hidden; padding: 38px 0 0 31px; box-shadow: inset -8px 0 8px -6px rgba(0,0,0,.25); }
.route h3 { font-size: 30px; line-height: 40px; font-weight: 900; color: #333; }
.rbox { width: 231px; height: 70px; margin-top: 17px; border: 1px solid #888; border-radius: 7px; padding: 11px 0 0 23px; display: flex; gap: 20px; font: 19px/30px Roboto, sans-serif; color: #777; letter-spacing: -.65px; }
.clip { width: 111px; overflow: hidden; white-space: nowrap; height: 32px; }

.chart { margin-top: -12px; }
.rad { height: 202px; overflow: hidden; display: flex; flex-direction: column; justify-content: flex-end; margin-top: 1px; position: relative; border-bottom: 1px solid #bbb; }
.rad::after { content: ""; position: absolute; top: 0; left: 0; right: 0; height: 14px; background: radial-gradient(ellipse 50% 100% at 50% 0, rgba(0,0,0,.28), rgba(0,0,0,0)); }
.rad div { height: 43px; flex: none; display: flex; justify-content: space-between; align-items: center; padding: 0 6px; background: #fff; }
.rad div:nth-child(even) { background: #f1f1f1; }
.rad .sel { background: #e5c400; }

.movab { width: 64px; height: 29px; border-radius: 5px; background: linear-gradient(90deg, #d4607c, #be0032 8px); padding: 6px 0 0 9px; margin-right: 7px; }
.cambio { display: block; width: 289px; height: 32px; margin-top: 7px; border: 2px solid #e2e2e2; border-radius: 4px; background: #fff; font-size: 14px; line-height: 28px; }
.strip { height: 10px; margin: 3px 0 7px; background: radial-gradient(circle at 19px 17px, #e5c400 10px, transparent 10.500px) #f1f1f1; }
.book { width: 100%; border-radius: 6px; color: #fff; display: flex; align-items: center; justify-content: center; gap: 9px; }
.red { height: 36px; background: #be0032; padding-right: 5px; }
.red svg { margin-bottom: 5px; }
.days { display: flex; gap: 12px; padding: 1px 0 0 13px; }
.days button { height: 32px; padding: 0 10px; border: 2px solid #e2e2e2; border-radius: 4px; background: #fff; line-height: 24px; padding-bottom: 2px; min-width: 62px; }
.days button + button { min-width: 75px; }
.days button.on { min-width: 105px; background: #e5c400; border-color: #e5c400; }
.temp { display: flex; gap: 17px; height: 62px; padding: 13px 0 0 65px; font-size: 30px; font-weight: 300; line-height: 53px; }
.wx { display: flex; padding: 7px 12px 0 2px; justify-content: space-between; }
.wx svg { fill: none; stroke: #2b2b2b; stroke-width: 1.600; }
.wx svg:nth-child(2) { margin-left: -15px; }
.wx svg:nth-child(3) { margin-left: -5px; }
.wx svg:nth-child(4) { margin-left: 21px; }
.wx svg:nth-child(5) { margin-left: 13px; }

.ops { display: flex; gap: 6px; margin-right: 13px; }
.ops b { font: italic 800 20px/24px "Open Sans", sans-serif; color: #111; margin-left: -6px; }
.ops svg { margin-top: 1px; }
.stop { display: flex; gap: 10px; padding: 8px 0 0 3px; height: 37px; }
.stop h3 { font-size: 22px; line-height: 19px; font-weight: 900; color: #e5c400; }
.clock { display: flex; justify-content: space-between; height: 21px; font-size: 14px; line-height: 17px; }
.dep { position: relative; height: 128px; overflow: hidden; background: #fff; }
.dr { display: grid; grid-template-columns: 77px 259px 104px 77px 46px 1fr; font-size: 17px; line-height: 27px; }
.dr b { font-weight: 400; }
.dh { height: 29px; background: #e5c400; line-height: 28px; }
.dh span:first-child { padding-left: 4px; }
.d1 { height: 32px; background: #f3f3f3; }
.d2 { height: 30px; } .d3 { height: 37px; background: #fcfcfc; line-height: 29px; }
.dr .dir { font-size: 14px; padding-top: 1px; }
.dr em { font: bold 14px/20px "Noto Sans", sans-serif; color: #e53935; margin-left: 6px; position: relative; top: 3px; }
.ok { color: #43a047; }
.no { color: #f44336; }
.old > * { opacity: .25; }
.dr.old em { color: #43a047; }
.blue { height: 38px; background: #344a9a; margin-top: 8px; gap: 7px; padding-right: 3px; }
.blue b { font-size: 22px; font-weight: 500; line-height: 24px; margin-top: -4px; }

.news { position: relative; height: 129px; overflow: hidden; margin-top: 1px; }
.news div { height: 36.500px; display: flex; align-items: center; padding: 0 7px 2px 11px; font-size: 17px; background: #fff; }
.news div:nth-child(odd) { background: #f1f1f1; }
.news i { border: solid transparent; border-width: 7px 0 7px 9px; border-left-color: #e5c400; margin-right: 8px; }
.news time { margin-left: auto; font-size: 14px; }
.right .flt { height: 35px; }
.works { position: relative; height: 130px; overflow: hidden; margin-top: 6px; width: 609px; }
.works article { display: flex; padding: 5px 4px 0; height: 75px; background: #fff; }
.works .w1 { background: #f1f1f1; }
.works article > div { margin-left: 12px; width: 550px; }
.works h4 { font-size: 17px; font-weight: 700; line-height: 20px; display: block; }
.works p { line-height: 27px; height: 22px; font-size: 15px; white-space: nowrap; }
.works .when { display: flex; justify-content: space-between; color: #888; font-size: 14px; line-height: 24px; }
.w1 .sign { margin-top: 11px; }
.works .w2 { padding-top: 4px; }
.w2 .sign { margin-top: 21px; }
.works .map { margin: 10px 0 0 -18px; }
.works .w2 .map { margin-top: 22px; }

footer { position: absolute; right: 0; bottom: 0; width: 467px; height: 31px; background: #fcfcfc; border-top-left-radius: 7px; box-shadow: 0 0 16px rgba(0,0,0,.3); display: flex; gap: 13px; padding: 0 11px 0 20px; line-height: 34px; font-size: 15px; color: #000; }
footer a { display: flex; gap: 7px; align-items: center; }
footer a svg { width: 8px; height: 10px; stroke: #000; stroke-width: .8; }
.copy { color: #222; margin-left: 3px; }
```
FILE: fit.js
```js
document.querySelectorAll('[data-w]').forEach(function (el) {
  var target = Number(el.dataset.w);
  el.style.width = 'max-content';
  var natural = el.offsetWidth;
  el.style.transform = 'scaleX(' + target / natural + ')';
  el.style.marginRight = (target - natural) + 'px';
});
```
